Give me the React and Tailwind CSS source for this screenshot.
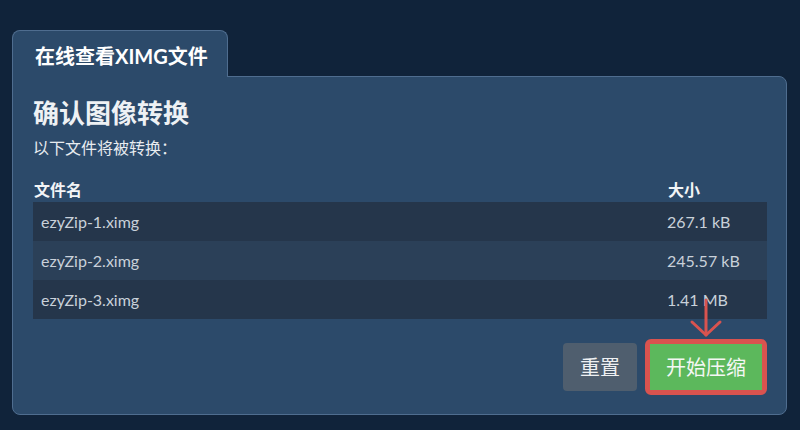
import React from 'react';

const files = [
  { name: 'ezyZip-1.ximg', size: '267.1 kB' },
  { name: 'ezyZip-2.ximg', size: '245.57 kB' },
  { name: 'ezyZip-3.ximg', size: '1.41 MB' },
];

const font = { fontFamily: 'Lato, "Noto Sans CJK SC", sans-serif' };

function DownArrow() {
  return (
    <svg
      className="absolute left-[39px] top-[-45px] pointer-events-none"
      width="34"
      height="40"
      viewBox="0 0 34 40"
      fill="none"
      stroke="#d9534f"
      strokeWidth="3"
      strokeLinecap="round"
      strokeLinejoin="round"
    >
      <line x1="17" y1="1" x2="17" y2="36" />
      <polyline points="3,23 17,36 31,23" />
    </svg>
  );
}

export default function App() {
  return (
    <div className="min-h-[430px] w-full bg-[#10233a] pt-[30px] pl-[12px]" style={font}>
      {/* Tab */}
      <div className="relative z-10 -mb-px inline-block rounded-t-lg border border-b-0 border-[#4f6d8f] bg-[#2c4a6a] pl-[22px] pr-[19px] pt-[13px] pb-[9px]">
        <span className="block text-[20px] leading-[24px] font-bold text-white">在线查看XIMG文件</span>
      </div>

      {/* Panel */}
      <div className="w-[775px] rounded-b-lg rounded-tr-lg border border-[#4f6d8f] bg-[#2c4a6a] pl-[20px] pr-[19px] pt-[21px] pb-[19px]">
        <h3 className="text-[26px] leading-[30px] font-bold text-[#eef1f4]">确认图像转换</h3>
        <p className="mt-[9px] text-[16px] leading-[22px] text-[#e8ecf0]">以下文件将被转换：</p>

        <div className="mt-[20px]">
          <div className="flex h-[23px] text-[16px] leading-[22px] font-bold text-[#f2f4f6]">
            <div className="w-[626px] pl-[1px]">文件名</div>
            <div className="flex-1 pl-[9px]">大小</div>
          </div>
          {files.map((f, i) => (
            <div
              key={f.name}
              className={`flex h-[39px] items-center text-[16px] text-[#c9d1da] ${
                i % 2 === 1 ? 'bg-[#2b4058]' : 'bg-[#25364b]'
              }`}
            >
              <div className="w-[626px] pl-[8px]">{f.name}</div>
              <div className="flex-1 pl-[8px]">{f.size}</div>
            </div>
          ))}
        </div>

        {/* Actions */}
        <div className="mt-[20px] flex items-center justify-end">
          <button className="h-[48px] w-[74px] rounded bg-[#4f5e6e] text-[20px] text-[#eef0f2]">重置</button>
          <div className="relative ml-[8px] rounded-md border-[5px] border-[#d9534f]">
            <DownArrow />
            <button className="block h-[46px] w-[112px] bg-[#5cb85c] text-[20px] text-[#f4f7f4]">开始压缩</button>
          </div>
        </div>
      </div>
    </div>
  );
}
